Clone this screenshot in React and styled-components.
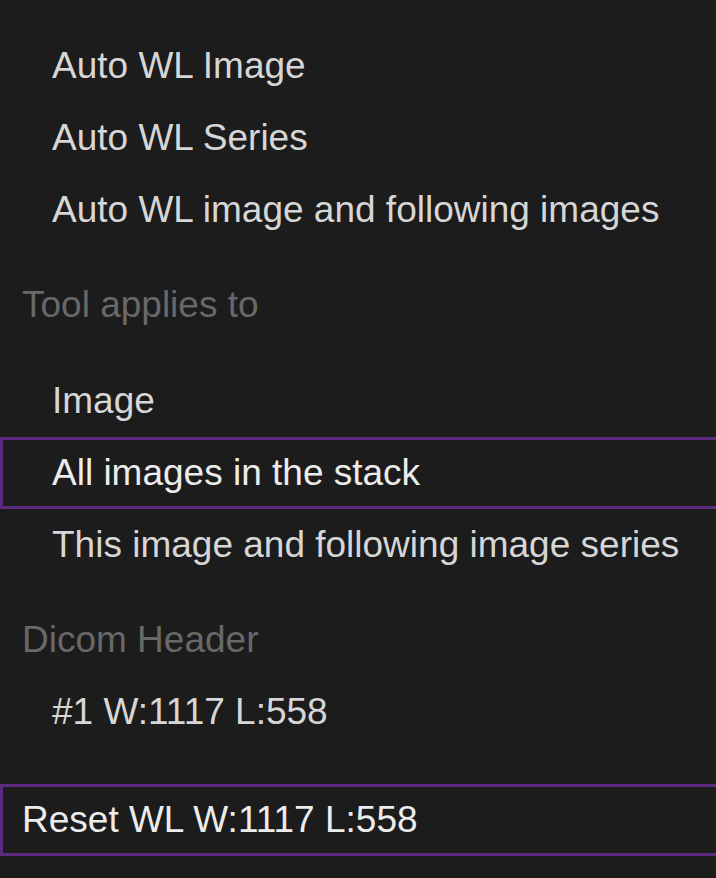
import React from "react";
import styled, { createGlobalStyle } from "styled-components";

const Global = createGlobalStyle`
  html, body { margin: 0; padding: 0; background: #1c1c1c; overflow: hidden; }
  body { font-family: "Liberation Sans", Arial, Helvetica, sans-serif; }
`;

const Panel = styled.div`
  width: 740px;
  height: 878px;
  background: #1c1c1c;
  padding-top: 30px;
  box-sizing: border-box;
  display: flex;
  flex-direction: column;
`;

const List = styled.div`
  display: flex;
  flex-direction: column;
  margin-top: ${(p) => p.$gap || 0}px;
`;

const Item = styled.div`
  height: 72px;
  box-sizing: border-box;
  display: flex;
  align-items: center;
  padding-left: ${(p) => (p.$indent ? 49 : 19)}px;
  border: 3px solid ${(p) => (p.$selected ? "#5b2a80" : "transparent")};
  color: ${(p) => (p.$selected ? "#ececec" : "#d6d6d6")};
  font-size: 37px;
  white-space: nowrap;
`;

const Heading = styled.div`
  height: 72px;
  margin-top: 23px;
  display: flex;
  align-items: center;
  padding-left: 22px;
  color: #686868;
  font-size: 37px;
  white-space: nowrap;
`;

export default function App() {
  return (
    <>
      <Global />
      <Panel>
        <List>
          <Item $indent>Auto WL Image</Item>
          <Item $indent>Auto WL Series</Item>
          <Item $indent>Auto WL image and following images</Item>
        </List>
        <Heading>Tool applies to</Heading>
        <List $gap={24}>
          <Item $indent>Image</Item>
          <Item $indent $selected>All images in the stack</Item>
          <Item $indent>This image and following image series</Item>
        </List>
        <Heading>Dicom Header</Heading>
        <List>
          <Item $indent>#1 W:1117 L:558</Item>
        </List>
        <List $gap={36}>
          <Item $selected>Reset WL W:1117 L:558</Item>
        </List>
      </Panel>
    </>
  );
}
